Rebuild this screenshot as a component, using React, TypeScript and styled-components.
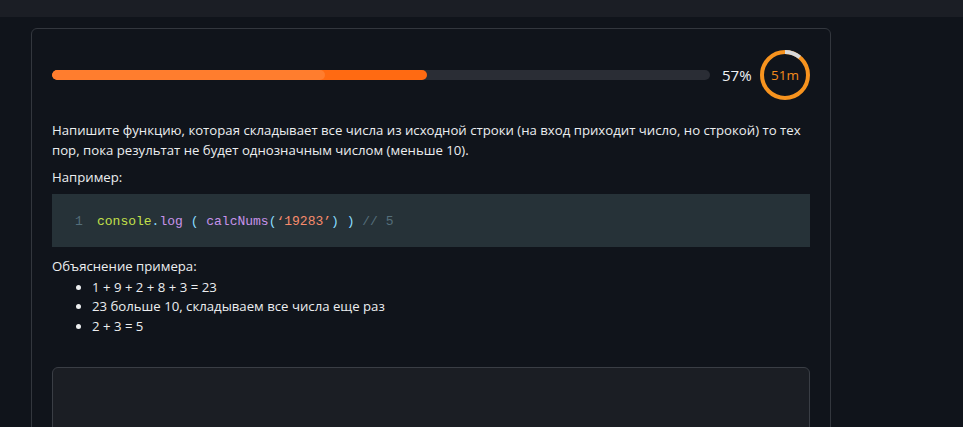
import React from "react";
import styled, { createGlobalStyle } from "styled-components";

const Global = createGlobalStyle`
  html, body { margin: 0; padding: 0; background: #10141b; }
  body { font-family: "Open Sans", "Noto Sans", sans-serif; color: #e6e8eb; overflow: hidden; }
`;

const TopBar = styled.div`
  height: 17px;
  background: #1b1e25;
`;

const Page = styled.div`
  padding: 11px 0 0 31px;
  height: 410px;
`;

const Card = styled.div`
  height: 420px;
  border: 1px solid #33373e;
  border-radius: 6px;
  padding: 21px 20px 0 20px;
  box-sizing: border-box;
  width: 800px;
  display: flex;
  flex-direction: column;
`;

const Header = styled.div`
  display: flex;
  align-items: center;
  height: 50px;
`;

const Track = styled.div`
  position: relative;
  flex: 1;
  height: 10px;
  border-radius: 5px;
  background: #2a2d35;
  overflow: hidden;
`;

const Fill = styled.div<{ $color: string }>`
  position: absolute;
  left: 0;
  top: 0;
  bottom: 0;
  border-radius: 5px;
  background: ${(p) => p.$color};
`;

const Percent = styled.span`
  margin: 0 8px 0 12px;
  font-size: 15px;
  color: #f0f2f4;
  width: 30px;
`;

const Timer = styled.div`
  position: relative;
  width: 50px;
  height: 50px;
  display: flex;
  align-items: center;
  justify-content: center;
`;

const TimerRing = styled.svg`
  position: absolute;
  inset: 0;
`;

const TimerText = styled.span`
  font-size: 13.5px;
  color: #f38a1c;
`;

const Text = styled.p<{ $mt?: number }>`
  margin: ${(p) => p.$mt ?? 0}px 0 0 0;
  font-size: 13.2px;
  line-height: 19.5px;
  color: #eceef0;
`;

const CodeBlock = styled.div`
  margin-top: 6px;
  height: 55px;
  box-sizing: border-box;
  padding: 3px 0 0 23px;
  background: #263238;
  display: flex;
  align-items: center;
  font-family: "Liberation Mono", "DejaVu Sans Mono", monospace;
  font-size: 13px;
  white-space: pre;
`;

const LineNo = styled.span`
  color: #546e7a;
  width: 22px;
`;

const Tok = styled.span<{ $c: string }>`
  color: ${(p) => p.$c};
`;

const List = styled.ul`
  margin: 1px 0 0 0;
  padding-left: 40px;
  font-size: 13.2px;
  line-height: 19.7px;
  color: #eceef0;
`;

const Editor = styled.div`
  margin-top: 30px;
  height: 80px;
  background: #1b1e24;
  border: 1px solid #3a3e45;
  border-radius: 6px;
`;

export default function App() {
  const r = 23;
  const c = 2 * Math.PI * r;
  const remain = 0.11;
  return (
    <>
      <Global />
      <TopBar />
      <Page>
        <Card>
          <Header>
            <Track>
              <Fill $color="#ff6a12" style={{ width: "57%" }} />
              <Fill $color="#ff7d2e" style={{ width: "41.5%" }} />
            </Track>
            <Percent>57%</Percent>
            <Timer>
              <TimerRing width="50" height="50" viewBox="0 0 50 50">
                <circle cx="25" cy="25" r={r} fill="none" stroke="#f7931e" strokeWidth="4" />
                <circle
                  cx="25"
                  cy="25"
                  r={r}
                  fill="none"
                  stroke="#d9d9d9"
                  strokeWidth="4"
                  strokeDasharray={`${c * remain} ${c}`}
                  transform="rotate(-90 25 25)"
                />
              </TimerRing>
              <TimerText>51m</TimerText>
            </Timer>
          </Header>
          <Text $mt={21}>
            Напишите функцию, которая складывает все числа из исходной строки (на вход приходит число, но строкой) то тех
            пор, пока результат не будет однозначным числом (меньше 10).
          </Text>
          <Text $mt={8}>Например:</Text>
          <CodeBlock>
            <LineNo>1</LineNo>
            <Tok $c="#c3e04a">console</Tok>
            <Tok $c="#89ddff">.</Tok>
            <Tok $c="#c792ea">log</Tok>
            <Tok $c="#89ddff"> ( </Tok>
            <Tok $c="#c792ea">calcNums</Tok>
            <Tok $c="#89ddff">(</Tok>
            <Tok $c="#f78c6c">‘19283’</Tok>
            <Tok $c="#89ddff">) ) </Tok>
            <Tok $c="#546e7a">// 5</Tok>
          </CodeBlock>
          <Text $mt={10}>Объяснение примера:</Text>
          <List>
            <li>1 + 9 + 2 + 8 + 3 = 23</li>
            <li>23 больше 10, складываем все числа еще раз</li>
            <li>2 + 3 = 5</li>
          </List>
          <Editor />
        </Card>
      </Page>
    </>
  );
}
